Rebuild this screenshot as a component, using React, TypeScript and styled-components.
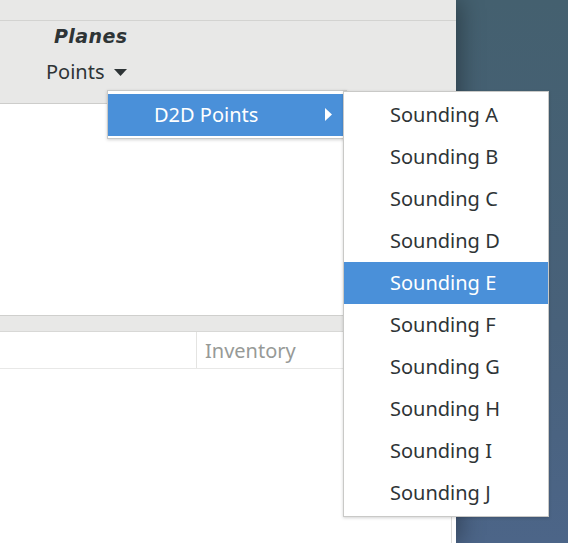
import React from "react";
import styled, { createGlobalStyle } from "styled-components";

const Global = createGlobalStyle`
  html, body { margin: 0; padding: 0; }
  body {
    width: 568px;
    height: 543px;
    overflow: hidden;
    font-family: "Noto Sans", "DejaVu Sans", sans-serif;
    color: #2e3436;
  }
`;

const Screen = styled.div`
  position: relative;
  display: flex;
  width: 568px;
  height: 543px;
  overflow: hidden;
  background: linear-gradient(180deg, #44606f 0%, #48617a 60%, #4c6588 100%);
`;

const Window = styled.div`
  display: flex;
  flex-direction: column;
  width: 456px;
  height: 100%;
  background: #ffffff;
  box-shadow: 4px 0 22px rgba(0, 0, 0, 0.35);
  z-index: 1;
`;

const TopStrip = styled.div`
  height: 20px;
  background: #e8e8e7;
  border-bottom: 1px solid #d3d3d1;
`;

const Toolbar = styled.div`
  height: 82px;
  background: #e8e8e7;
  border-bottom: 1px solid #cdcdcb;
  display: flex;
  flex-direction: column;
  align-items: flex-start;
  padding-left: 46px;
`;

const GroupTitle = styled.div`
  margin-top: 3px;
  margin-left: 8px;
  font-family: "DejaVu Sans", sans-serif;
  font-size: 19px;
  font-weight: 700;
  font-style: italic;
  letter-spacing: 0.4px;
  line-height: 24px;
  color: #2e3436;
`;

const MenuButton = styled.div`
  display: flex;
  align-items: center;
  gap: 9px;
  margin-top: 10px;
  font-size: 20px;
  line-height: 28px;
  color: #2e3436;
`;

const UpperPane = styled.div`
  height: 211px;
  background: #ffffff;
`;

const Handle = styled.div`
  height: 15px;
  background: #e8e8e7;
  border-top: 1px solid #cfcfcd;
  border-bottom: 1px solid #d8d8d6;
`;

const LowerPane = styled.div`
  flex: 1;
  display: flex;
  flex-direction: column;
  border-right: 1px solid #dcdcda;
  margin-right: 4px;
`;

const HeaderRow = styled.div`
  display: flex;
  height: 36px;
  border-bottom: 1px solid #e8e8e7;
`;

const HeaderCell = styled.div<{ $w?: number; $sep?: boolean }>`
  ${(p) => (p.$w ? `width: ${p.$w}px;` : "flex: 1;")}
  border-left: ${(p) => (p.$sep ? "1px solid #e4e4e2" : "none")};
  padding-left: ${(p) => (p.$sep ? "8px" : "0")};
  display: flex;
  align-items: center;
  font-size: 20px;
  color: #979a97;
`;

const Desktop = styled.div`
  flex: 1;
`;

const Menu = styled.div<{ $left: number; $top: number; $width: number; $padTop: number }>`
  position: absolute;
  left: ${(p) => p.$left}px;
  top: ${(p) => p.$top}px;
  width: ${(p) => p.$width}px;
  background: #ffffff;
  border: 1px solid #c9c9c7;
  box-shadow: 0 1px 3px rgba(0, 0, 0, 0.18);
  padding: ${(p) => p.$padTop}px 0 2px;
  z-index: 5;
  box-sizing: border-box;
`;

const MenuItem = styled.div<{ $active?: boolean }>`
  display: flex;
  align-items: center;
  height: 42px;
  box-sizing: border-box;
  padding: 0 14px 2px 46px;
  font-size: 20px;
  background: ${(p) => (p.$active ? "#4a90d9" : "transparent")};
  color: ${(p) => (p.$active ? "#ffffff" : "#2e3436")};
`;

const ItemLabel = styled.span`
  flex: 1;
`;

const DownArrow = () => (
  <svg width="13" height="7" viewBox="0 0 13 7">
    <polygon points="0,0 13,0 6.5,7" fill="#2e3436" />
  </svg>
);

const RightArrow = () => (
  <svg width="7" height="13" viewBox="0 0 7 13">
    <polygon points="0,0 7,6.5 0,13" fill="#ffffff" />
  </svg>
);

const soundings = ["A", "B", "C", "D", "E", "F", "G", "H", "I", "J"];

export default function App() {
  return (
    <>
      <Global />
      <Screen>
        <Window>
          <TopStrip />
          <Toolbar>
            <GroupTitle>Planes</GroupTitle>
            <MenuButton>
              Points <DownArrow />
            </MenuButton>
          </Toolbar>
          <UpperPane />
          <Handle />
          <LowerPane>
            <HeaderRow>
              <HeaderCell $w={196} />
              <HeaderCell $sep>Inventory</HeaderCell>
            </HeaderRow>
          </LowerPane>
        </Window>
        <Desktop />
        <Menu $left={107} $top={90} $width={240} $padTop={3}>
          <MenuItem $active>
            <ItemLabel>D2D Points</ItemLabel>
            <RightArrow />
          </MenuItem>
        </Menu>
        <Menu $left={343} $top={91} $width={206} $padTop={2}>
          {soundings.map((s) => (
            <MenuItem key={s} $active={s === "E"}>
              Sounding {s}
            </MenuItem>
          ))}
        </Menu>
      </Screen>
    </>
  );
}
